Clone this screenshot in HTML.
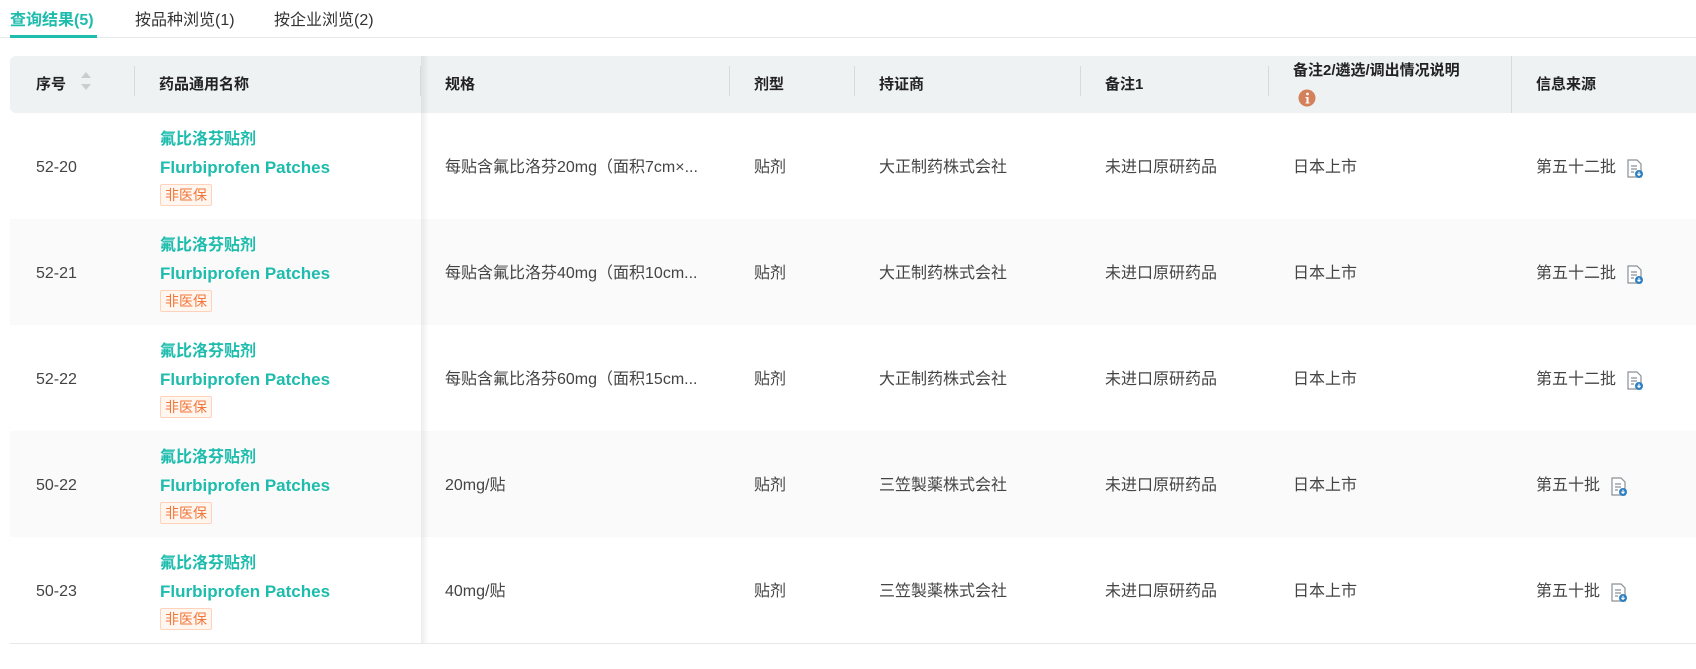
<!DOCTYPE html>
<html><head><meta charset="utf-8"><style>
*{margin:0;padding:0;box-sizing:border-box}
body{width:1696px;height:669px;background:#fff;font-family:"Liberation Sans","Noto Sans CJK SC",sans-serif;color:#333;position:relative;overflow:hidden;font-size:15px}
.a{position:absolute;white-space:nowrap}
.tab{top:6px;font-size:16px;color:#333}
.hd{position:absolute;left:10px;top:56px;width:1700px;height:57px;background:#eef2f3;border-radius:6px 0 0 6px}
.h{position:absolute;font-weight:bold;color:#222;font-size:15px}
.dv{position:absolute;top:66px;width:1px;height:30px;background:#d5dadc}
.row{position:absolute;left:10px;width:1700px;height:106px}
.c{position:absolute;color:#444;font-size:16px;line-height:20px}
.n1{color:#1dbcad;font-weight:bold;font-size:16px}
.n2{color:#1dbcad;font-weight:bold;font-size:17px}
.tag{position:absolute;border:1px solid #ffd3bb;background:#fff6f0;color:#f2763a;font-size:14px;line-height:20px;padding:0 4px;border-radius:2px}
</style></head><body>
<div class="a tab" style="left:10px;color:#1dbcad;font-weight:bold">查询结果(5)</div>
<div class="a tab" style="left:135px">按品种浏览(1)</div>
<div class="a tab" style="left:274px">按企业浏览(2)</div>
<div class="a" style="left:0;top:37px;width:1696px;height:1px;background:#e6e8ea"></div>
<div class="a" style="left:10px;top:35px;width:87px;height:3px;background:#1dbcad"></div>

<div class="hd"></div>
<div class="h" style="left:36px;top:73px">序号</div>
<svg class="a" style="left:80px;top:71px" width="12" height="20"><path d="M6 1L11 7H1z" fill="#c9cdd2"/><path d="M6 19L11 13H1z" fill="#c9cdd2"/></svg>
<div class="dv" style="left:134px"></div>
<div class="h" style="left:159px;top:73px">药品通用名称</div>
<div class="dv" style="left:420px"></div>
<div class="h" style="left:445px;top:73px">规格</div>
<div class="dv" style="left:729px"></div>
<div class="h" style="left:754px;top:73px">剂型</div>
<div class="dv" style="left:854px"></div>
<div class="h" style="left:879px;top:73px">持证商</div>
<div class="dv" style="left:1080px"></div>
<div class="h" style="left:1105px;top:73px">备注1</div>
<div class="dv" style="left:1268px"></div>
<div class="h" style="left:1293px;top:59px">备注2/遴选/调出情况说明</div>
<svg class="a" style="left:1298px;top:89px" width="18" height="18"><circle cx="9" cy="9" r="8.5" fill="#d4805a"/><circle cx="9.5" cy="5" r="1.4" fill="#fff"/><path d="M7.5 8h3v5.5h1v1h-4v-1h1V9h-1z" fill="#fff"/></svg>
<div class="a" style="left:1511px;top:56px;width:1px;height:57px;background:#d5dadc"></div>
<div class="h" style="left:1536px;top:73px">信息来源</div>

<div id="rows"></div>
<div class="a" style="left:10px;top:643px;width:1700px;height:1px;background:#e8e8e8"></div>
<div class="a" style="left:421px;top:56px;width:8px;height:587px;background:linear-gradient(90deg,rgba(0,0,0,0.07),rgba(0,0,0,0))"></div>

<script>
var d=[["52-20","每贴含氟比洛芬20mg（面积7cm×...","大正制药株式会社","第五十二批"],
["52-21","每贴含氟比洛芬40mg（面积10cm...","大正制药株式会社","第五十二批"],
["52-22","每贴含氟比洛芬60mg（面积15cm...","大正制药株式会社","第五十二批"],
["50-22","20mg/贴","三笠製薬株式会社","第五十批"],
["50-23","40mg/贴","三笠製薬株式会社","第五十批"]];
var h="";
d.forEach(function(r,i){
var t=113+i*106;
h+='<div class="row" style="top:'+t+'px;background:'+(i%2?'#fafafa':'#fff')+'"></div>';
h+='<div class="c a" style="left:36px;top:'+(t+45)+'px">'+r[0]+'</div>';
h+='<div class="c a n1" style="left:160px;top:'+(t+17)+'px">氟比洛芬贴剂</div>';
h+='<div class="c a n2" style="left:160px;top:'+(t+45)+'px">Flurbiprofen Patches</div>';
h+='<div class="tag" style="left:160px;top:'+(t+71)+'px">非医保</div>';
h+='<div class="c a" style="left:445px;top:'+(t+45)+'px">'+r[1]+'</div>';
h+='<div class="c a" style="left:754px;top:'+(t+45)+'px">贴剂</div>';
h+='<div class="c a" style="left:879px;top:'+(t+45)+'px">'+r[2]+'</div>';
h+='<div class="c a" style="left:1105px;top:'+(t+45)+'px">未进口原研药品</div>';
h+='<div class="c a" style="left:1293px;top:'+(t+45)+'px">日本上市</div>';
h+='<div class="c a" style="left:1536px;top:'+(t+45)+'px">'+r[3]+'</div>';
var ix=r[3].length==5?1626:1610;
h+='<svg class="a" style="left:'+ix+'px;top:'+(t+46)+'px" width="18" height="19"><path d="M2 1h9l4 4v13H2z" fill="#fff" stroke="#8a9096" stroke-width="1.2"/><path d="M5 7h6M5 10h6M5 13h3" stroke="#8a9096" stroke-width="1.2"/><circle cx="13" cy="15" r="4" fill="#2f7fc1"/><path d="M13 12.8v3.6M11.4 14.8l1.6 1.6 1.6-1.6" stroke="#fff" stroke-width="1.1" fill="none"/></svg>';
});
document.getElementById("rows").outerHTML=h;
</script>
</body></html>
